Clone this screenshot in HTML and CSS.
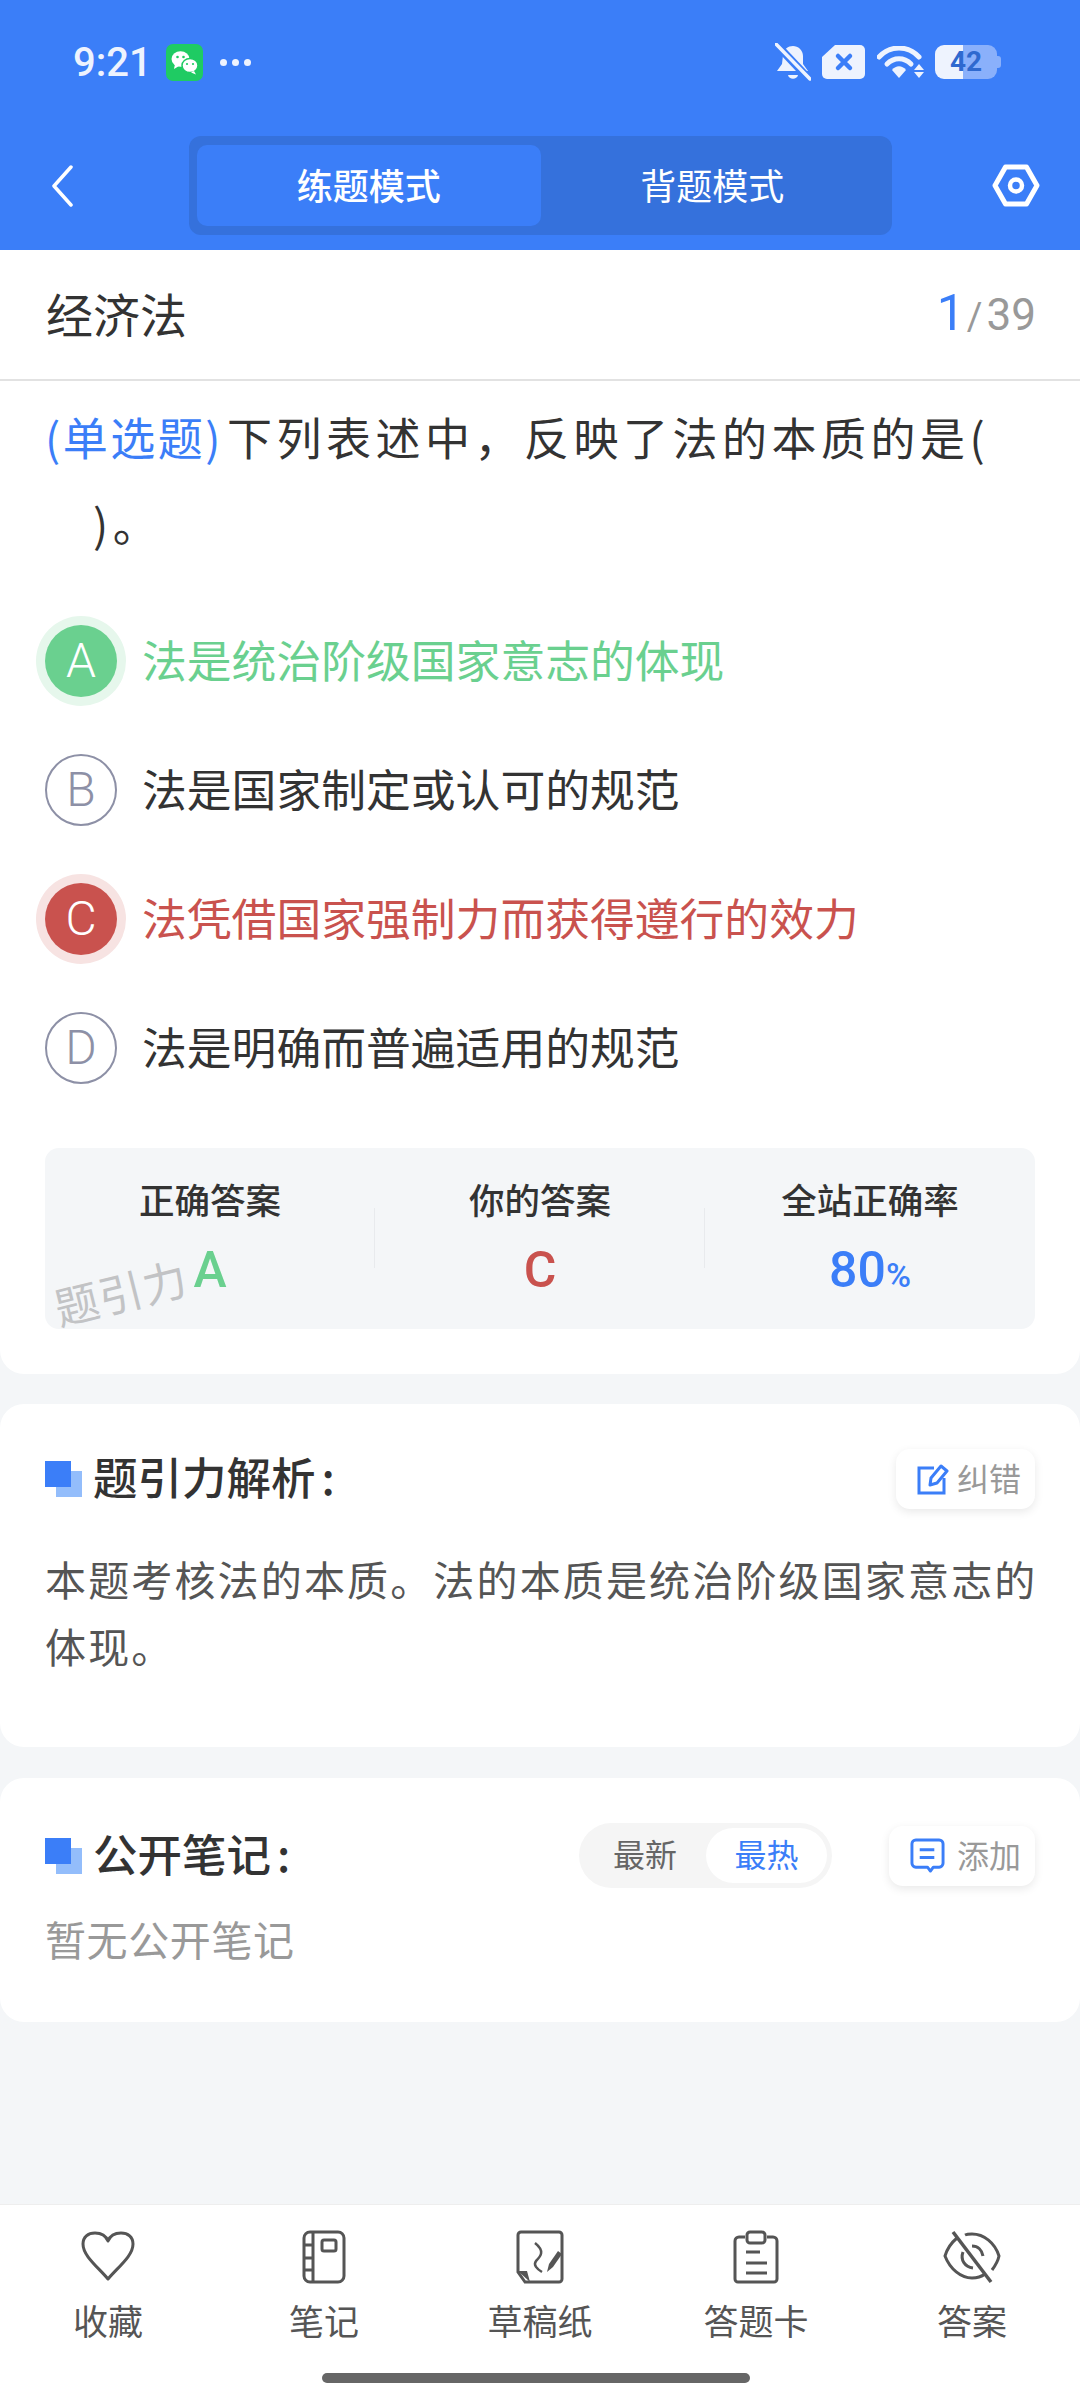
FILE: index.html
```html
<!DOCTYPE html>
<html lang="zh-CN">
<head>
    <meta charset="UTF-8">
    <meta name="viewport" content="width=device-width, initial-scale=1.0">
    <title>经济法</title>
    <link rel="stylesheet" href="styles.css">
</head>
<body>
    <div class="page">
        <header class="header">
            <div class="status-bar">
                <div class="status-left">
                    <span class="time">9:21</span>
                    <svg class="wechat" viewBox="0 0 37 37">
                        <rect width="37" height="37" rx="7" fill="#1fcb63"/>
                        <ellipse cx="14.500" cy="15" rx="9" ry="7.800" fill="#fff"/>
                        <path d="M9 20l-1 5 5-3z" fill="#fff"/>
                        <ellipse cx="24" cy="21.500" rx="8" ry="7" fill="#fff" stroke="#1fcb63" stroke-width="1.500"/>
                        <path d="M28 27l2 3.500-5-2z" fill="#fff"/>
                        <circle cx="11.500" cy="13" r="1.300" fill="#1fcb63"/>
                        <circle cx="17.500" cy="13" r="1.300" fill="#1fcb63"/>
                        <circle cx="21" cy="20" r="1.100" fill="#1fcb63"/>
                        <circle cx="27" cy="20" r="1.100" fill="#1fcb63"/>
                    </svg>
                    <span class="status-dots"><i></i><i></i><i></i></span>
                </div>
                <div class="status-right">
                    <svg class="bell" viewBox="0 0 36 38">
                        <path d="M8 12c1-6 5-9 10-9s10 4 10 10v8l5 7H2l5-7z" fill="#eef3fe"/>
                        <path d="M13 32h10c-1 5-9 5-10 0z" fill="#eef3fe"/>
                        <path d="M0 0l35 37" stroke="#3b7ef8" stroke-width="8"/>
                        <path d="M1 1l34 35" stroke="#eef3fe" stroke-width="3.500" stroke-linecap="round"/>
                    </svg>
                    <svg class="sim" viewBox="0 0 43 34">
                        <path d="M13 0h25a5 5 0 0 1 5 5v24a5 5 0 0 1-5 5H5a5 5 0 0 1-5-5V12z" fill="#eef3fe"/>
                        <path d="M16 11l12 12M28 11L16 23" stroke="#3b7ef8" stroke-width="4.500" stroke-linecap="round"/>
                    </svg>
                    <svg class="wifi" viewBox="0 0 48 33">
                        <path d="M2 11c11-12 29-12 40 0" fill="none" stroke="#eef3fe" stroke-width="5" stroke-linecap="round"/>
                        <path d="M10 18c7-7 17-7 24 0" fill="none" stroke="#eef3fe" stroke-width="5" stroke-linecap="round"/>
                        <path d="M15 24c4-5 10-5 14 0l-7 8z" fill="#eef3fe"/>
                        <path d="M42 18l5 6H37zM37 26h10l-5 6z" fill="#eef3fe"/>
                    </svg>
                    <div class="battery">42</div>
                </div>
            </div>
            <nav class="nav">
                <svg class="back" viewBox="0 0 22 42">
                    <path d="M20 2L3 21l17 19" fill="none" stroke="#fff" stroke-width="3.500" stroke-linecap="round" stroke-linejoin="round"/>
                </svg>
                <div class="mode-tabs">
                    <div class="mode-tab active">练题模式</div>
                    <div class="mode-tab">背题模式</div>
                </div>
                <svg class="settings" viewBox="0 0 48 43">
                    <path d="M13.500 3h21L45 21.500 34.500 40h-21L3 21.500z" fill="none" stroke="#fff" stroke-width="5" stroke-linejoin="round"/>
                    <circle cx="24" cy="21.500" r="6" fill="none" stroke="#fff" stroke-width="4.500"/>
                </svg>
            </nav>
        </header>

        <div class="subject-row">
            <span class="subject">经济法</span>
            <span class="progress"><b>1</b><em>/</em>39</span>
        </div>

        <section class="card question-card">
            <p class="question"><span class="q-type">(单选题)</span>下列表述中，反映了法的本质的是(<br><span class="q-indent">)。</span></p>
            <ul class="options">
                <li class="option right"><span class="letter">A</span><span class="option-text">法是统治阶级国家意志的体现</span></li>
                <li class="option"><span class="letter">B</span><span class="option-text">法是国家制定或认可的规范</span></li>
                <li class="option wrong"><span class="letter">C</span><span class="option-text">法凭借国家强制力而获得遵行的效力</span></li>
                <li class="option"><span class="letter">D</span><span class="option-text">法是明确而普遍适用的规范</span></li>
            </ul>
            <div class="stats">
                <div class="stat"><span class="stat-label">正确答案</span><span class="stat-value green">A</span></div>
                <div class="stat"><span class="stat-label">你的答案</span><span class="stat-value red">C</span></div>
                <div class="stat"><span class="stat-label">全站正确率</span><span class="stat-value blue">80<small>%</small></span></div>
                <span class="watermark">题引力</span>
            </div>
        </section>

        <section class="card analysis-card">
            <div class="section-head">
                <h3 class="section-title"><span class="mark"></span>题引力解析<span class="colon">:</span></h3>
                <button class="chip">
                    <svg viewBox="0 0 32 32">
                        <path d="M17 5H2v25h25V15" fill="none" stroke="#3b7ef8" stroke-width="3"/>
                        <path d="M13 22l1-7L24 3l6 5-10 12z" fill="none" stroke="#3b7ef8" stroke-width="3" stroke-linejoin="round"/>
                    </svg>
                    纠错
                </button>
            </div>
            <p class="analysis-text">本题考核法的本质。法的本质是统治阶级国家意志的体现。</p>
        </section>

        <section class="card notes-card">
            <div class="section-head">
                <h3 class="section-title"><span class="mark"></span>公开笔记<span class="colon">:</span></h3>
                <div class="head-tools">
                    <div class="sort-tabs">
                        <span class="sort-tab">最新</span>
                        <span class="sort-tab active">最热</span>
                    </div>
                    <button class="chip chip-add">
                        <svg viewBox="0 0 36 36">
                            <path d="M6 2h24a4 4 0 0 1 4 4v20a4 4 0 0 1-4 4h-6l-3 4-3-4H6a4 4 0 0 1-4-4V6a4 4 0 0 1 4-4z" fill="none" stroke="#3b7ef8" stroke-width="3" stroke-linejoin="round"/>
                            <path d="M10 12h15M10 20h15" stroke="#3b7ef8" stroke-width="3"/>
                        </svg>
                        添加
                    </button>
                </div>
            </div>
            <p class="notes-empty">暂无公开笔记</p>
        </section>

        <footer class="toolbar">
            <div class="tools">
                <div class="tool">
                    <svg width="54" height="54" viewBox="0 0 54 54">
                        <path d="M27 49C17 37 2 26 2 14 2 7 7 3 14 3c6 0 11 3 13 8 2-5 7-8 13-8 7 0 12 4 12 11 0 12-15 23-25 35z" fill="none" stroke="#555" stroke-width="3" stroke-linejoin="round"/>
                    </svg>
                    <span>收藏</span>
                </div>
                <div class="tool">
                    <svg width="54" height="54" viewBox="0 0 54 54">
                        <rect x="7" y="2" width="40" height="50" rx="6" fill="none" stroke="#555" stroke-width="3"/>
                        <path d="M16 2v50M7 15h9M7 28h9M7 40h9" stroke="#555" stroke-width="3"/>
                        <rect x="25" y="10" width="14" height="11" rx="2" fill="none" stroke="#555" stroke-width="3"/>
                    </svg>
                    <span>笔记</span>
                </div>
                <div class="tool">
                    <svg width="54" height="54" viewBox="0 0 54 54">
                        <path d="M12 52L5 42V5a3 3 0 0 1 3-3h38a3 3 0 0 1 3 3v44a3 3 0 0 1-3 3z" fill="none" stroke="#555" stroke-width="3"/>
                        <path d="M5 41h9l3 11z" fill="#555"/>
                        <path d="M22 13c10 8 6 13 1 18-3 4 1 8 6 11" fill="none" stroke="#555" stroke-width="2.500"/>
                        <path d="M34 42l2-8 9-13 4 3-9 13z" fill="#555"/>
                    </svg>
                    <span>草稿纸</span>
                </div>
                <div class="tool">
                    <svg width="54" height="54" viewBox="0 0 54 54">
                        <path d="M16 7h-6a4 4 0 0 0-4 4v38a3 3 0 0 0 3 3h36a3 3 0 0 0 3-3V11a4 4 0 0 0-4-4h-6" fill="none" stroke="#555" stroke-width="3"/>
                        <rect x="18" y="2" width="18" height="11" rx="3" fill="none" stroke="#555" stroke-width="3"/>
                        <path d="M17 22h14M17 33h21M17 43h21" stroke="#555" stroke-width="3"/>
                    </svg>
                    <span>答题卡</span>
                </div>
                <div class="tool">
                    <svg width="58" height="54" viewBox="0 0 58 54">
                        <path d="M14 8C8 13 4 19 2 26c5 13 16 22 27 22 5 0 9-1 13-4M22 5c2-1 5-1 7-1 12 0 23 9 27 22-1 5-4 10-7 14" fill="none" stroke="#555" stroke-width="3"/>
                        <path d="M20 22c-3 8 2 15 10 16M29 16c6 0 10 4 11 10" fill="none" stroke="#555" stroke-width="3"/>
                        <path d="M10 2l38 50" stroke="#555" stroke-width="3.500"/>
                    </svg>
                    <span>答案</span>
                </div>
            </div>
            <div class="home-bar"></div>
        </footer>
    </div>
</body>
</html>
```

FILE: styles.css
```css
* {
    box-sizing: border-box;
}
body {
    margin: 0;
    background: #f4f6f8;
    font-family: "Noto Sans CJK SC", "Noto Sans", sans-serif;
    color: #333;
}
p, ul, h3 {
    margin: 0;
    padding: 0;
}
.page {
    display: flex;
    flex-direction: column;
    width: 1080px;
    height: 2400px;
}

/* header */
.header {
    height: 250px;
    padding-top: 43px;
    background: #3b7ef8;
    flex-shrink: 0;
}
.status-bar {
    display: flex;
    justify-content: space-between;
    align-items: center;
    height: 38px;
    padding: 0 83px 0 73px;
}
.status-left, .status-right {
    display: flex;
    align-items: center;
}
.time {
    width: 93px;
    font-family: Roboto, sans-serif;
    font-size: 40px;
    font-weight: 500;
    color: #eef3fe;
}
.wechat {
    width: 37px;
    height: 37px;
}
.status-dots {
    display: flex;
    gap: 5px;
    margin-left: 17px;
}
.status-dots i {
    width: 7px;
    height: 7px;
    border-radius: 50%;
    background: #eef3fe;
}
.bell {
    width: 36px;
    height: 38px;
}
.sim {
    width: 43px;
    height: 34px;
    margin-left: 11px;
}
.wifi {
    width: 48px;
    height: 33px;
    margin-left: 12px;
}
.battery {
    position: relative;
    width: 62px;
    height: 34px;
    margin-left: 10px;
    border-radius: 9px;
    background: linear-gradient(to right, #eef3fe 45%, #8ab0fb 45%);
    font-family: Roboto, sans-serif;
    font-size: 28px;
    font-weight: 700;
    line-height: 34px;
    text-align: center;
    color: #2f69cf;
}
.battery::after {
    content: "";
    position: absolute;
    top: 11px;
    right: -4px;
    width: 4px;
    height: 12px;
    border-radius: 0 3px 3px 0;
    background: #8ab0fb;
}
.nav {
    display: flex;
    align-items: center;
    height: 99px;
    margin-top: 55px;
    padding-left: 51px;
}
.back {
    width: 22px;
    height: 42px;
    margin-right: 116px;
}
.mode-tabs {
    display: flex;
    width: 703px;
    height: 99px;
    padding: 9px 8px;
    border-radius: 12px;
    background: #3571dc;
}
.mode-tab {
    flex: 1;
    border-radius: 10px;
    font-size: 36px;
    line-height: 79px;
    text-align: center;
    color: #fff;
}
.mode-tab.active {
    background: #3b7ef8;
    font-weight: 500;
}
.settings {
    width: 48px;
    height: 43px;
    margin-left: 100px;
}

/* subject row */
.subject-row {
    display: flex;
    justify-content: space-between;
    align-items: center;
    height: 131px;
    padding: 0 44px 4px 46px;
    background: #fff;
    border-bottom: 2px solid #e2e2e2;
    flex-shrink: 0;
}
.subject {
    font-size: 47px;
    color: #333;
}
.progress {
    font-family: Roboto, sans-serif;
    font-size: 44px;
    color: #999;
}
.progress b {
    font-size: 50px;
    font-weight: 400;
    color: #3b7ef8;
}
.progress em {
    margin: 0 4px 0 2px;
    font-style: normal;
    font-size: 38px;
}

/* cards */
.card {
    background: #fff;
    border-radius: 24px;
    padding: 0 45px;
}
.question-card {
    padding-top: 13px;
    padding-bottom: 45px;
    border-radius: 0 0 24px 24px;
}
.question {
    font-size: 45px;
    line-height: 86px;
    letter-spacing: 4.500px;
    white-space: nowrap;
}
.q-type {
    margin-right: 4px;
    color: #3b7ef8;
    letter-spacing: 2.500px;
}
.q-indent {
    margin-left: 48px;
}
.options {
    list-style: none;
    margin-top: 30px;
}
.option {
    display: flex;
    align-items: center;
    height: 129px;
    font-size: 44.800px;
}
.option-text {
    margin-bottom: 4px;
}
.letter {
    display: flex;
    justify-content: center;
    align-items: center;
    width: 72px;
    height: 72px;
    margin-right: 25px;
    border: 2px solid #8d90a6;
    border-radius: 50%;
    font-family: Roboto, sans-serif;
    font-size: 48px;
    font-weight: 300;
    color: #8d90a6;
    flex-shrink: 0;
}
.right {
    color: #6ad08f;
}
.right .letter {
    border: 0;
    background: #6ad08f;
    box-shadow: 0 0 0 9px #e6f7ec;
    color: #fff;
}
.wrong {
    color: #c9524e;
}
.wrong .letter {
    border: 0;
    background: #c9524e;
    box-shadow: 0 0 0 9px #f7e3e2;
    color: #fff;
}
.stats {
    position: relative;
    display: flex;
    height: 181px;
    margin-top: 36px;
    border-radius: 14px;
    background: #f4f6f8;
}
.stat {
    position: relative;
    display: flex;
    flex: 1;
    flex-direction: column;
    align-items: center;
    padding-top: 28px;
}
.stat + .stat::before {
    content: "";
    position: absolute;
    left: -1px;
    top: 60px;
    width: 1px;
    height: 60px;
    background: #e8eaed;
}
.stat-label {
    height: 46px;
    font-size: 35.500px;
    font-weight: 500;
    line-height: 46px;
}
.stat-value {
    margin-top: 21px;
    font-family: Roboto, sans-serif;
    font-size: 50px;
    font-weight: 500;
    line-height: 54px;
}
.stat-value small {
    font-size: 34px;
}
.green {
    color: #6ad08f;
}
.red {
    color: #c9524e;
}
.blue {
    color: #3b7ef8;
}
.watermark {
    position: absolute;
    left: 8px;
    top: 118px;
    font-size: 44px;
    line-height: 50px;
    color: #c2c3c5;
    letter-spacing: 1px;
    transform: rotate(-14deg);
}

.section-head {
    display: flex;
    justify-content: space-between;
    align-items: center;
}
.section-title {
    display: flex;
    align-items: flex-start;
    height: 60px;
    font-size: 44.500px;
    font-weight: 500;
    line-height: 54px;
}
.section-title .colon {
    margin-left: 6px;
}
.mark {
    position: relative;
    width: 37px;
    height: 36px;
    margin: 12px 11px 0 0;
}
.mark::before, .mark::after {
    content: "";
    position: absolute;
    width: 26px;
    height: 26px;
}
.mark::before {
    right: 0;
    bottom: 0;
    background: #93bdfb;
}
.mark::after {
    left: 0;
    top: 0;
    background: #3b7ef8;
}
.chip {
    display: flex;
    align-items: center;
    height: 60px;
    padding: 0 14px 4px 21px;
    border: 0;
    border-radius: 14px;
    background: #fff;
    box-shadow: 0 3px 10px rgba(0, 0, 0, 0.09);
    font-family: inherit;
    font-size: 32px;
    color: #999;
}
.chip svg {
    width: 32px;
    height: 32px;
    margin: 4px 8px 0 0;
}
.chip-add svg {
    width: 35px;
    height: 35px;
    margin-right: 12px;
}
.analysis-card {
    height: 343px;
    margin-top: 30px;
    padding-top: 45px;
}
.analysis-text {
    margin: 36px -6px 0 0;
    font-size: 41px;
    line-height: 67px;
    letter-spacing: 2.150px;
    color: #555;
}
.notes-card {
    height: 244px;
    margin-top: 31px;
    padding-top: 45px;
}
.head-tools {
    display: flex;
    align-items: center;
    gap: 57px;
}
.sort-tabs {
    display: flex;
    align-items: center;
    width: 253px;
    height: 65px;
    padding: 5px;
    border-radius: 33px;
    background: #f5f5f5;
}
.sort-tab {
    flex: 1;
    font-size: 32px;
    line-height: 51px;
    height: 55px;
    text-align: center;
    color: #666;
}
.sort-tab.active {
    flex: 0 0 121px;
    border-radius: 28px;
    background: #fff;
    color: #3b7ef8;
}
.notes-empty {
    margin-top: 20px;
    font-size: 41px;
    line-height: 60px;
    letter-spacing: 0.600px;
    color: #999;
}

/* bottom toolbar */
.toolbar {
    position: relative;
    height: 196px;
    margin-top: auto;
    background: #fff;
    border-top: 1px solid #eee;
}
.tools {
    display: flex;
    padding-top: 25px;
}
.tool {
    display: flex;
    flex: 1;
    flex-direction: column;
    align-items: center;
    font-size: 35px;
    color: #555;
}
.tool span {
    margin-top: 12px;
    line-height: 48px;
}
.home-bar {
    position: absolute;
    left: 322px;
    bottom: 17px;
    width: 428px;
    height: 10px;
    border-radius: 5px;
    background: #666;
}
```
